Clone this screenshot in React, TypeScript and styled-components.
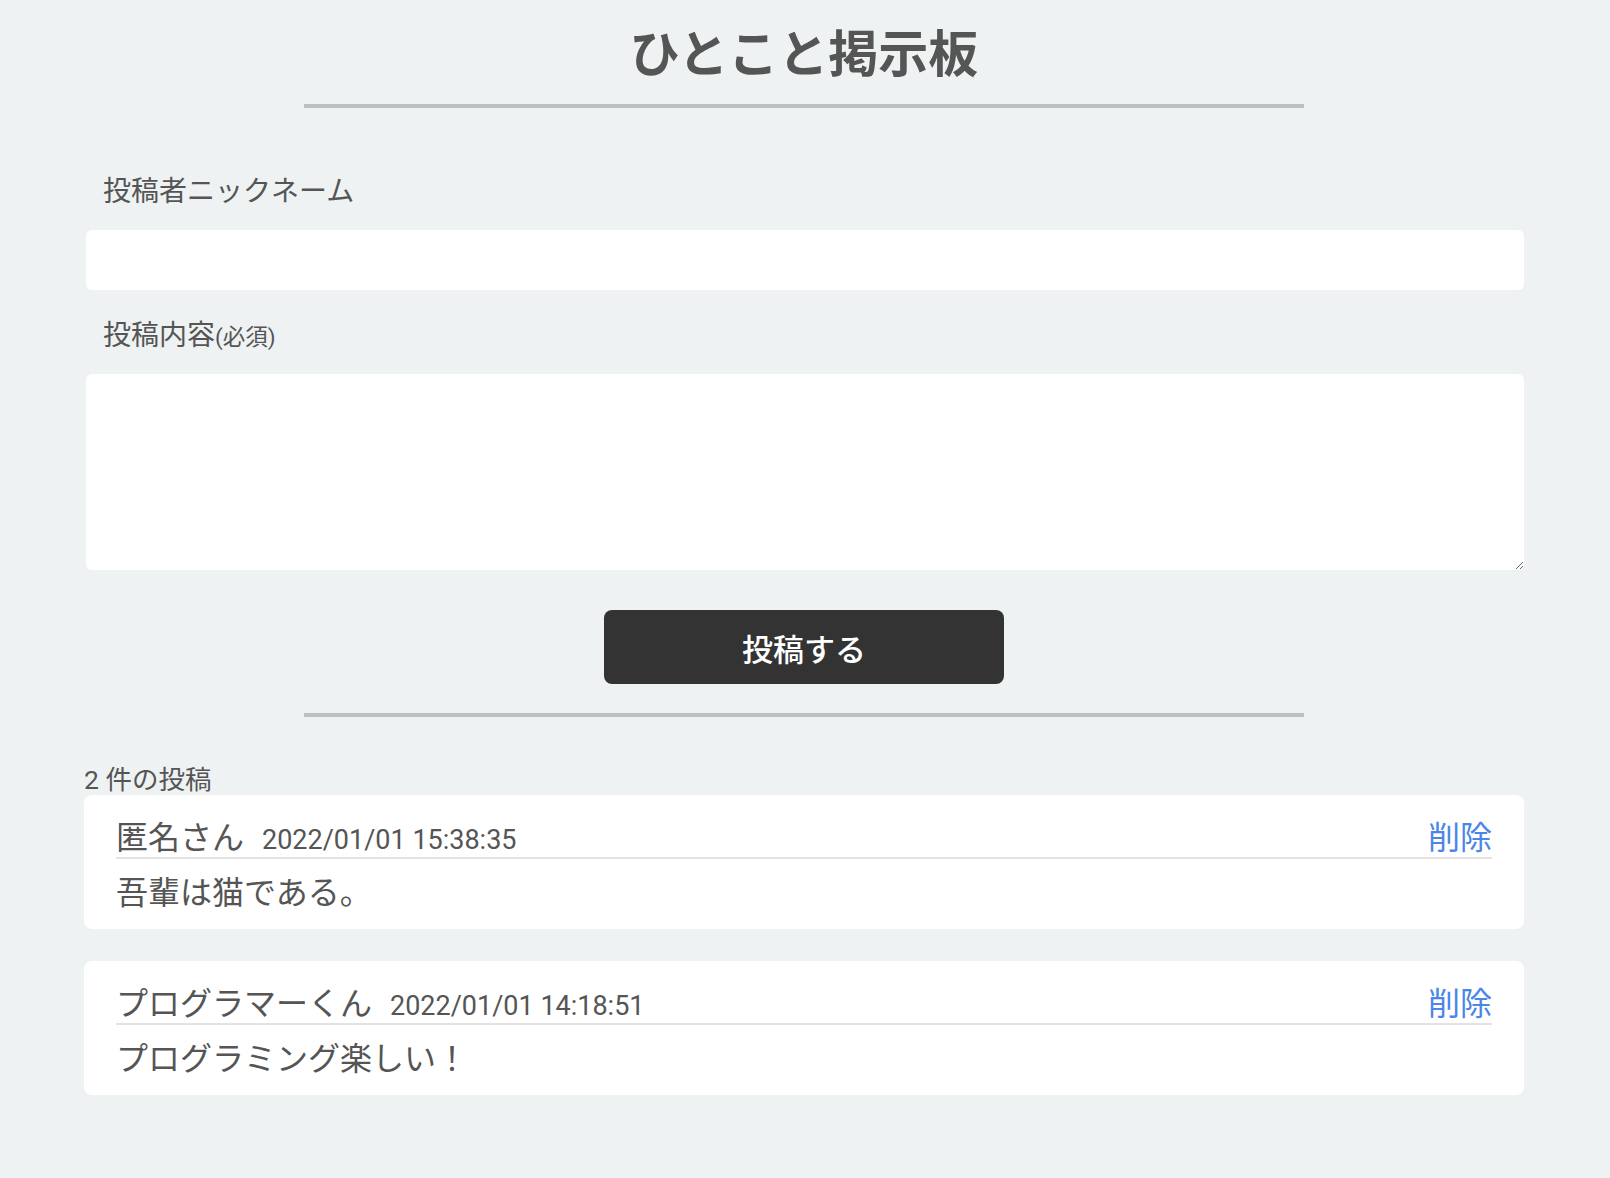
import styled, { createGlobalStyle } from "styled-components";

const GlobalStyle = createGlobalStyle`
    body {
        margin: 0;
        background-color: #eef2f3;
        color: #555555;
        font-family: "Roboto", "Noto Sans CJK JP", sans-serif;
    }
`;

const Page = styled.div`
    padding: 0 86px 80px 84px;
`;

const Title = styled.h1`
    margin: 0;
    padding-top: 25px;
    font-size: 50px;
    line-height: 60px;
    font-weight: 700;
    text-align: center;
    color: #555555;
`;

const Rule = styled.hr<{ $top: number; $bottom: number }>`
    width: 1000px;
    height: 4px;
    border: none;
    background-color: #bcc0c2;
    margin: ${props => props.$top}px auto ${props => props.$bottom}px;
`;

const Form = styled.form`
    display: flex;
    flex-direction: column;
`;

const Label = styled.label<{ $top: number; $bottom: number }>`
    display: block;
    padding: 0 19px;
    margin: ${props => props.$top}px 0 ${props => props.$bottom}px;
    font-size: 28px;
    line-height: 32px;
`;

const Small = styled.span`
    font-size: 22.5px;
`;

const TextInput = styled.input`
    box-sizing: border-box;
    height: 60px;
    margin: 0 0 0 2px;
    padding: 0 16px;
    border: none;
    border-radius: 6px;
    background: #ffffff;
    font-size: 24px;
    font-family: inherit;
    outline: none;
`;

const TextArea = styled.textarea`
    box-sizing: border-box;
    height: 196px;
    margin: 0 0 0 2px;
    padding: 12px 16px;
    border: none;
    border-radius: 6px;
    background: #ffffff;
    font-size: 24px;
    font-family: inherit;
    resize: vertical;
    outline: none;
`;

const SubmitButton = styled.button`
    align-self: center;
    width: 400px;
    height: 74px;
    margin-top: 40px;
    border: none;
    border-radius: 8px;
    background-color: #333333;
    color: #ffffff;
    font-family: inherit;
    font-size: 31px;
    font-weight: 500;
    cursor: pointer;
`;

const Count = styled.div`
    font-size: 26.5px;
    line-height: 31px;
`;

const PostList = styled.ul`
    list-style: none;
    margin: 0;
    padding: 0;
`;

const Post = styled.li`
    background-color: #ffffff;
    border-radius: 8px;
    padding: 24px 32px 12px;
    margin-bottom: 32px;
`;

const PostHeader = styled.div`
    display: flex;
    align-items: baseline;
    border-bottom: 2px solid #e3e3e3;
    line-height: 38px;
`;

const Name = styled.span`
    font-size: 32px;
`;

const Time = styled.span`
    margin-left: 18px;
    font-size: 27px;
    line-height: 31px;
`;

const DeleteLink = styled.a`
    margin-left: auto;
    font-size: 32px;
    color: #4a86e8;
    text-decoration: none;
    cursor: pointer;
`;

const Body = styled.p`
    margin: 10px 0 0;
    font-size: 32px;
    line-height: 48px;
`;

interface IPost {
    id: number;
    name: string;
    time: string;
    body: string;
}

const posts: IPost[] = [
    { id: 2, name: "匿名さん", time: "2022/01/01 15:38:35", body: "吾輩は猫である。" },
    { id: 1, name: "プログラマーくん", time: "2022/01/01 14:18:51", body: "プログラミング楽しい！" },
];

function App() {
    return (
        <Page>
            <GlobalStyle />
            <Title>ひとこと掲示板</Title>
            <Rule $top={19} $bottom={0} />
            <Form onSubmit={e => e.preventDefault()}>
                <Label $top={68} $bottom={22} htmlFor="nickname">投稿者ニックネーム</Label>
                <TextInput id="nickname" type="text" />
                <Label $top={30} $bottom={21} htmlFor="content">
                    投稿内容<Small>(必須)</Small>
                </Label>
                <TextArea id="content" />
                <SubmitButton type="submit">投稿する</SubmitButton>
            </Form>
            <Rule $top={29} $bottom={47} />
            <Count>2 件の投稿</Count>
            <PostList>
                {posts.map(post => (
                    <Post key={post.id}>
                        <PostHeader>
                            <Name>{post.name}</Name>
                            <Time>{post.time}</Time>
                            <DeleteLink>削除</DeleteLink>
                        </PostHeader>
                        <Body>{post.body}</Body>
                    </Post>
                ))}
            </PostList>
        </Page>
    );
}

export default App;
